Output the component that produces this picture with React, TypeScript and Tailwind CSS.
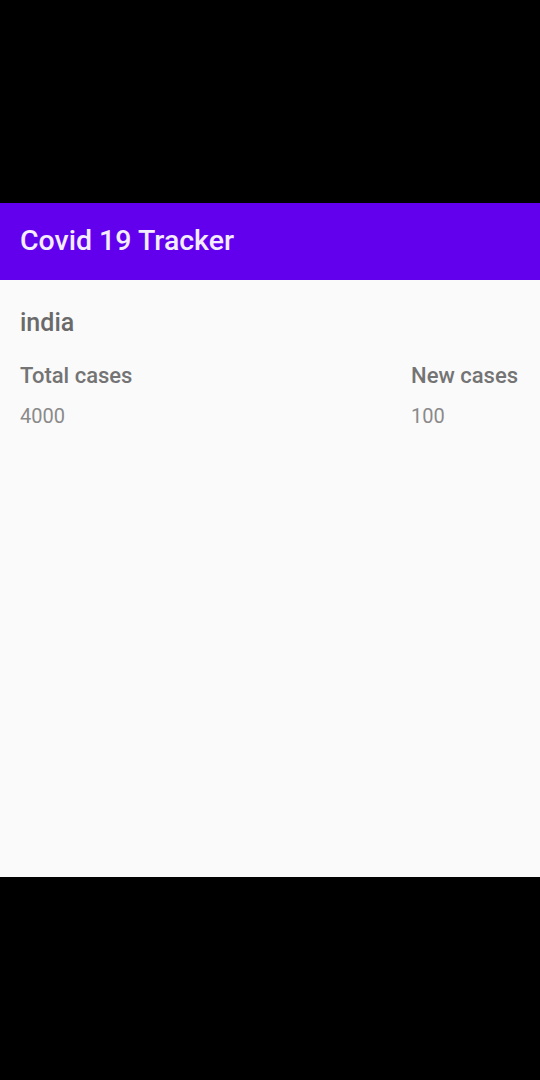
export default function App() {
  return (
    <div className="w-[540px] h-[1080px] bg-black flex flex-col font-['Roboto',sans-serif]">
      <div className="h-[203px] shrink-0" />
      <header className="h-[77px] shrink-0 bg-[#6200ee] flex items-center px-5 shadow-md">
        <h1 className="text-[28.5px] font-medium text-[#f4ecff] leading-none">Covid 19 Tracker</h1>
      </header>
      <main className="h-[597px] shrink-0 bg-[#fafafa] pl-5 pr-[22px] pt-[28px]">
        <p className="text-[25px] font-medium text-[#6a6a6a] leading-[30px]">india</p>
        <div className="flex justify-between mt-[24px]">
          <div className="flex flex-col">
            <span className="text-[22px] font-medium text-[#747474] leading-[28px]">Total cases</span>
            <span className="text-[20px] text-[#8a8a8a] leading-[26px] mt-[13px]">4000</span>
          </div>
          <div className="flex flex-col">
            <span className="text-[22px] font-medium text-[#747474] leading-[28px]">New cases</span>
            <span className="text-[20px] text-[#8a8a8a] leading-[26px] mt-[13px]">100</span>
          </div>
        </div>
      </main>
      <div className="flex-1" />
    </div>
  );
}
